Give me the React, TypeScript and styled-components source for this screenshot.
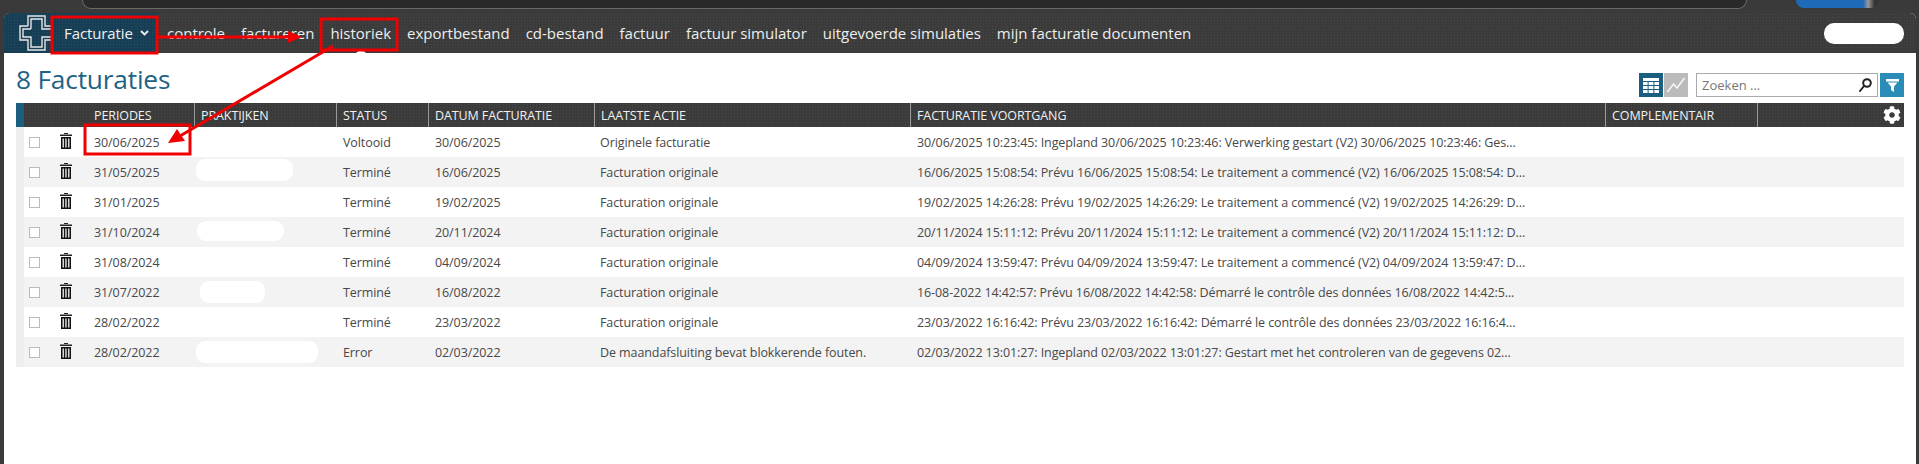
import React from "react";
import styled, { createGlobalStyle } from "styled-components";
import { FaCog } from "react-icons/fa";

const GlobalStyle = createGlobalStyle`
  html, body {
    margin: 0;
    padding: 0;
    background: #3a3a3a;
  }
  * {
    box-sizing: border-box;
  }
`;

const texture = `
  background-image: radial-gradient(rgba(255, 255, 255, 0.07) 0.8px, transparent 0.9px);
  background-size: 3px 3px;
`;

const Page = styled.div`
  position: relative;
  width: 1919px;
  height: 464px;
  overflow: hidden;
  background: #3a3a3a;
  font-family: "Open Sans", "Noto Sans", sans-serif;
`;

const BrowserStrip = styled.div`
  height: 13px;
  display: flex;
  align-items: flex-start;
  padding-left: 82px;
`;

const AddressBar = styled.div`
  width: 1665px;
  height: 9px;
  background: #292929;
  border: 1px solid #6a6a6a;
  border-top: none;
  border-radius: 0 0 12px 12px;
`;

const ProfilePill = styled.div`
  width: 82px;
  height: 8px;
  margin-left: 49px;
  background: linear-gradient(90deg, #1e6ab8 0 82%, #999 88%, #333 96%);
  border-radius: 0 0 14px 14px;
`;

const AppWindow = styled.div`
  margin: 0 3px 0 4px;
  height: 451px;
  background: #fff;
  border-radius: 6px 6px 0 0;
  overflow: hidden;
`;

const NavBar = styled.nav`
  height: 40px;
  display: flex;
  align-items: center;
  background-color: #3b3b3b;
  ${texture}
`;

const Brand = styled.div`
  width: 153px;
  height: 100%;
  flex: none;
  display: flex;
  align-items: center;
  padding-left: 15px;
  background-color: #163f56;
  ${texture}
`;

const BrandName = styled.span`
  margin-left: 13px;
  color: #f0f0f0;
  font-size: 15px;
  letter-spacing: -0.1px;
`;

const Chevron = styled.svg`
  margin-left: 7px;
`;

const NavLinks = styled.div`
  display: flex;
  flex: 1;
  gap: 16px;
  padding-left: 10px;
`;

const NavLink = styled.a`
  position: relative;
  color: #eee;
  font-size: 15px;
  letter-spacing: -0.01px;
  white-space: nowrap;
`;

const ActiveCaret = styled.span`
  position: absolute;
  left: 50%;
  bottom: -12px;
  width: 10px;
  height: 4px;
  margin-left: -5px;
  background: #fff;
  border-radius: 5px 5px 0 0;
`;

const UserPill = styled.div`
  width: 80px;
  height: 21px;
  margin-right: 12px;
  background: #fff;
  border-radius: 10px;
`;

const Content = styled.main`
  padding: 0 12px;
`;

const TitleRow = styled.div`
  height: 50px;
  display: flex;
  align-items: flex-end;
  justify-content: space-between;
  padding-bottom: 6px;
`;

const Title = styled.h1`
  margin: 0;
  color: #1f6384;
  font-size: 26.3px;
  font-weight: 400;
  line-height: 36px;
  letter-spacing: -0.2px;
`;

const Tools = styled.div`
  display: flex;
  align-items: center;
`;

const ToolButton = styled.div<{ $color: string; $gap?: number }>`
  width: 24px;
  height: 24px;
  display: flex;
  align-items: center;
  justify-content: center;
  margin-left: ${(p) => p.$gap ?? 0}px;
  background: ${(p) => p.$color};
`;

const SearchBox = styled.div`
  width: 182px;
  height: 24px;
  margin-left: 8px;
  display: flex;
  align-items: center;
  justify-content: space-between;
  padding: 0 5px;
  border: 1px solid #aaa;
  background: #fff;
  color: #777;
  font-size: 13px;
`;

const gridColumns = "8px 70px 100px 142px 92px 166px 316px 695px 152px 147px";

const Table = styled.div`
  width: 1888px;
`;

const HeaderRow = styled.div`
  display: grid;
  grid-template-columns: ${gridColumns};
  height: 24px;
  background-color: #3b3b3b;
  ${texture}
`;

const HeaderStrip = styled.div`
  background: #1a5e80;
`;

const HeaderCell = styled.div<{ $divider?: boolean }>`
  display: flex;
  align-items: center;
  padding-left: ${(p) => (p.$divider ? 6 : 0)}px;
  border-left: ${(p) => (p.$divider ? "1px solid #9a9a9a" : "none")};
  color: #f2f2f2;
  font-size: 12.5px;
  letter-spacing: -0.1px;
  white-space: nowrap;
`;

const GearCell = styled(HeaderCell)`
  justify-content: flex-end;
  padding-right: 3px;
`;

const Row = styled.div<{ $odd: boolean }>`
  display: grid;
  grid-template-columns: ${gridColumns};
  height: 30px;
  background: ${(p) => (p.$odd ? "#fff" : "#f3f3f3")};
`;

const RowStrip = styled.div`
  background: #eeeeee;
`;

const ActionCell = styled.div`
  display: flex;
  align-items: center;
  padding-left: 5px;
`;

const CheckBox = styled.span`
  width: 11px;
  height: 11px;
  border: 1px solid #bbb;
  background: #fff;
`;

const TrashIcon = styled.svg`
  margin-left: 20px;
  margin-top: -2px;
`;

const Cell = styled.div<{ $pad?: number }>`
  display: flex;
  align-items: center;
  padding-left: ${(p) => p.$pad ?? 0}px;
  color: #484848;
  font-size: 12.5px;
  letter-spacing: -0.09px;
  white-space: nowrap;
`;

const Redaction = styled.span<{ $left: number; $width: number; $height: number; $shift: number }>`
  display: block;
  width: ${(p) => p.$width}px;
  height: ${(p) => p.$height}px;
  margin-left: ${(p) => p.$left}px;
  margin-top: ${(p) => p.$shift}px;
  background: #fff;
  border-radius: 9px;
`;

const Annotations = styled.svg`
  position: absolute;
  left: 0;
  top: 0;
  pointer-events: none;
`;

const navItems = [
  "controle",
  "factureren",
  "historiek",
  "exportbestand",
  "cd-bestand",
  "factuur",
  "factuur simulator",
  "uitgevoerde simulaties",
  "mijn facturatie documenten",
];

const columns = [
  "PRAKTIJKEN",
  "STATUS",
  "DATUM FACTURATIE",
  "LAATSTE ACTIE",
  "FACTURATIE VOORTGANG",
  "COMPLEMENTAIR",
];

const rows = [
  {
    period: "30/06/2025",
    status: "Voltooid",
    date: "30/06/2025",
    action: "Originele facturatie",
    progress: "30/06/2025 10:23:45: Ingepland 30/06/2025 10:23:46: Verwerking gestart (V2) 30/06/2025 10:23:46: Ges...",
  },
  {
    period: "31/05/2025",
    status: "Terminé",
    date: "16/06/2025",
    action: "Facturation originale",
    progress: "16/06/2025 15:08:54: Prévu 16/06/2025 15:08:54: Le traitement a commencé (V2) 16/06/2025 15:08:54: D...",
    blur: { left: 2, width: 97, height: 22, shift: -4 },
  },
  {
    period: "31/01/2025",
    status: "Terminé",
    date: "19/02/2025",
    action: "Facturation originale",
    progress: "19/02/2025 14:26:28: Prévu 19/02/2025 14:26:29: Le traitement a commencé (V2) 19/02/2025 14:26:29: D...",
  },
  {
    period: "31/10/2024",
    status: "Terminé",
    date: "20/11/2024",
    action: "Facturation originale",
    progress: "20/11/2024 15:11:12: Prévu 20/11/2024 15:11:12: Le traitement a commencé (V2) 20/11/2024 15:11:12: D...",
    blur: { left: 3, width: 87, height: 20, shift: -2 },
  },
  {
    period: "31/08/2024",
    status: "Terminé",
    date: "04/09/2024",
    action: "Facturation originale",
    progress: "04/09/2024 13:59:47: Prévu 04/09/2024 13:59:47: Le traitement a commencé (V2) 04/09/2024 13:59:47: D...",
  },
  {
    period: "31/07/2022",
    status: "Terminé",
    date: "16/08/2022",
    action: "Facturation originale",
    progress: "16-08-2022 14:42:57: Prévu 16/08/2022 14:42:58: Démarré le contrôle des données 16/08/2022 14:42:5...",
    blur: { left: 6, width: 65, height: 22, shift: 0 },
  },
  {
    period: "28/02/2022",
    status: "Terminé",
    date: "23/03/2022",
    action: "Facturation originale",
    progress: "23/03/2022 16:16:42: Prévu 23/03/2022 16:16:42: Démarré le contrôle des données 23/03/2022 16:16:4...",
  },
  {
    period: "28/02/2022",
    status: "Error",
    date: "02/03/2022",
    action: "De maandafsluiting bevat blokkerende fouten.",
    progress: "02/03/2022 13:01:27: Ingepland 02/03/2022 13:01:27: Gestart met het controleren van de gegevens 02...",
    blur: { left: 2, width: 122, height: 22, shift: 0 },
  },
];

const Logo = () => (
  <svg width="32" height="36" viewBox="0 0 32 36" fill="none" stroke="#e6e6e6" strokeWidth="1.4">
    <path d="M9 11V1H26V11H32M32 25H26V35H9V25H1V11H9" />
    <path d="M12 14V4H23V14H32M32 22H23V32H12V22H4V14H12" />
  </svg>
);

const Trash = () => (
  <TrashIcon width="12" height="16" viewBox="0 0 12 16">
    <rect x="4" y="0" width="4" height="1" fill="#222" />
    <rect x="0" y="1.5" width="12" height="1.5" fill="#222" />
    <rect x="1" y="4" width="10" height="12" fill="#111" />
    <rect x="2.5" y="5.5" width="1.5" height="9" fill="#d8d8d8" />
    <rect x="5.2" y="5.5" width="1.5" height="9" fill="#d8d8d8" />
    <rect x="8" y="5.5" width="1.5" height="9" fill="#d8d8d8" />
  </TrashIcon>
);

const TableIcon = () => (
  <svg width="16" height="15" viewBox="0 0 16 15" fill="#fff">
    <rect x="0" y="0" width="16" height="3" />
    {[4, 8, 12].map((y) => (
      <React.Fragment key={y}>
        <rect x="0" y={y} width="4.6" height="3" />
        <rect x="5.6" y={y} width="4.8" height="3" />
        <rect x="11.4" y={y} width="4.6" height="3" />
      </React.Fragment>
    ))}
  </svg>
);

const ChartIcon = () => (
  <svg width="18" height="16" viewBox="0 0 18 16" fill="none" stroke="#f4f4f4" strokeWidth="1.6">
    <path d="M0.5 15L6.5 7L10 11L17.5 1" />
  </svg>
);

const SearchIcon = () => (
  <svg width="13" height="14" viewBox="0 0 13 14" fill="none" stroke="#222" strokeWidth="2">
    <circle cx="8" cy="5" r="3.8" />
    <path d="M5 8L1 13" strokeLinecap="round" />
  </svg>
);

const FilterIcon = () => (
  <svg width="13" height="13" viewBox="0 0 13 13" fill="#fff">
    <path d="M0 0H13V2.5H0ZM1.5 3.5H11.5L8 7.5V13L5 11V7.5Z" />
  </svg>
);

const App = () => {
  return (
    <Page>
      <GlobalStyle />
      <BrowserStrip>
        <AddressBar />
        <ProfilePill />
      </BrowserStrip>
      <AppWindow>
        <NavBar>
          <Brand>
            <Logo />
            <BrandName>Facturatie</BrandName>
            <Chevron width="9" height="6" viewBox="0 0 9 6" fill="none" stroke="#f0f0f0" strokeWidth="1.8">
              <path d="M1 1L4.5 4.5L8 1" />
            </Chevron>
          </Brand>
          <NavLinks>
            {navItems.map((item) => (
              <NavLink key={item}>
                {item}
                {item === "historiek" && <ActiveCaret />}
              </NavLink>
            ))}
          </NavLinks>
          <UserPill />
        </NavBar>
        <Content>
          <TitleRow>
            <Title>8 Facturaties</Title>
            <Tools>
              <ToolButton $color="#1a5e80">
                <TableIcon />
              </ToolButton>
              <ToolButton $color="#bbbbbb" $gap={1}>
                <ChartIcon />
              </ToolButton>
              <SearchBox>
                Zoeken ...
                <SearchIcon />
              </SearchBox>
              <ToolButton $color="#2b8cb8" $gap={2}>
                <FilterIcon />
              </ToolButton>
            </Tools>
          </TitleRow>
          <Table>
            <HeaderRow>
              <HeaderStrip />
              <HeaderCell />
              <HeaderCell>PERIODES</HeaderCell>
              {columns.map((col) => (
                <HeaderCell key={col} $divider>
                  {col}
                </HeaderCell>
              ))}
              <GearCell $divider>
                <FaCog size={18} color="#fff" />
              </GearCell>
            </HeaderRow>
            {rows.map((row, i) => (
              <Row key={i} $odd={i % 2 === 0}>
                <RowStrip />
                <ActionCell>
                  <CheckBox />
                  <Trash />
                </ActionCell>
                <Cell>{row.period}</Cell>
                <Cell>
                  {row.blur && (
                    <Redaction
                      $left={row.blur.left}
                      $width={row.blur.width}
                      $height={row.blur.height}
                      $shift={row.blur.shift}
                    />
                  )}
                </Cell>
                <Cell $pad={7}>{row.status}</Cell>
                <Cell $pad={7}>{row.date}</Cell>
                <Cell $pad={6}>{row.action}</Cell>
                <Cell $pad={7}>{row.progress}</Cell>
                <Cell />
                <Cell />
              </Row>
            ))}
          </Table>
        </Content>
      </AppWindow>
      {/* red markup drawn over the screenshot */}
      <Annotations width="1919" height="464" viewBox="0 0 1919 464" fill="none" stroke="#f00000" strokeWidth="3">
        <rect x="52" y="17" width="105" height="36" />
        <rect x="321" y="19" width="76" height="31" />
        <rect x="85" y="125" width="105" height="29" />
        <path d="M157 37H292" />
        <path d="M302 37L288 31V43Z" fill="#f00000" stroke="none" />
        <path d="M333 46L180 136" />
        <path d="M168 143L177 129L185 141Z" fill="#f00000" stroke="none" />
      </Annotations>
    </Page>
  );
};

export default App;
